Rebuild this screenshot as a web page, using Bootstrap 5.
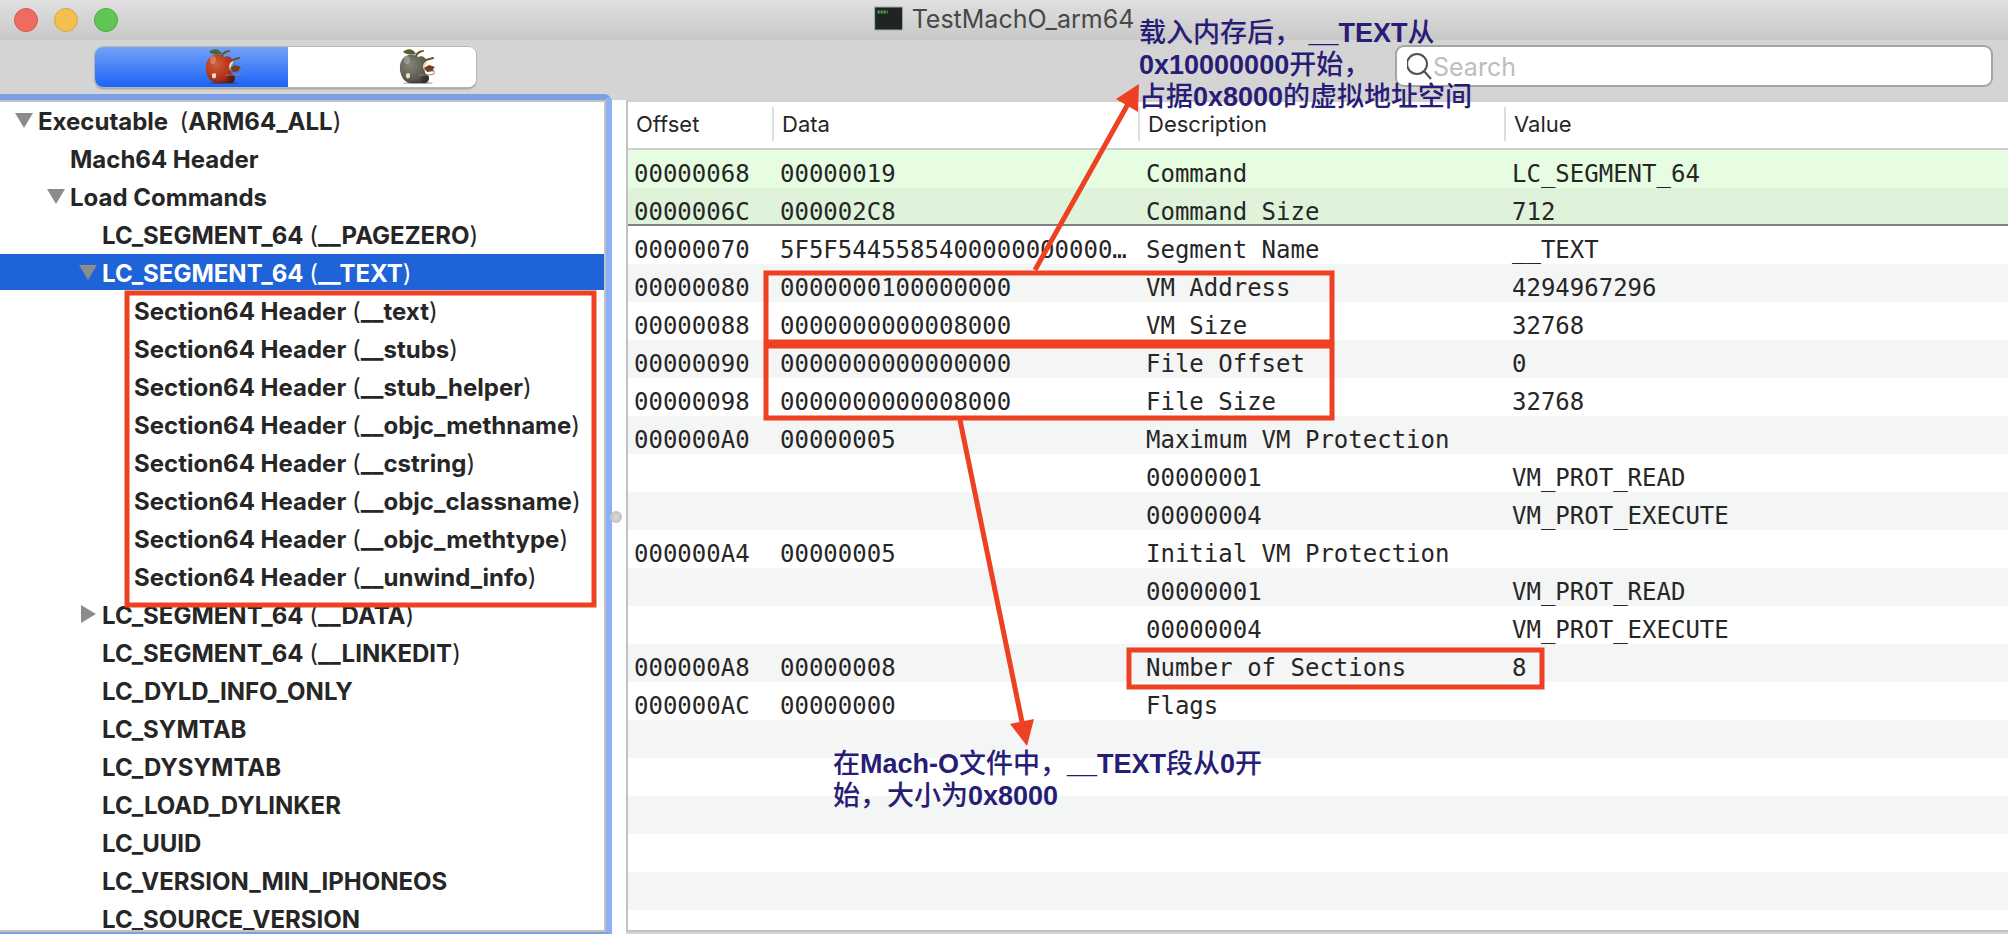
<!DOCTYPE html>
<html lang="zh-CN">
<head>
<meta charset="utf-8">
<meta name="viewport" content="width=device-width, initial-scale=1">
<title>TestMachO_arm64</title>
<link href="https://cdn.jsdelivr.net/npm/bootstrap@5.3.0/dist/css/bootstrap.min.css" rel="stylesheet">
<style>
  body { font-family: Inter, "Noto Sans CJK SC", sans-serif; color: #262626; background: #d4d4d4; }
  .titlebar { height: 40px; background: linear-gradient(#e0e0e0, #c8c8c8); padding: 0 14px; }
  .light { width: 24px; height: 24px; border: 1px solid; border-radius: 50%; padding: 0; }
  .light-close { background: #ee6b60; border-color: #d9564b; }
  .light-min { background: #f5bf4f; border-color: #dba53c; }
  .light-zoom { background: #61c554; border-color: #4eaa41; }
  .caption { font-size: 25px; line-height: 30px; color: #484848; }
  .toolbar { height: 54px; background: #d4d4d4; padding: 5px 15px 7px 95px; }
  .segments { width: 381px; height: 40px; border-radius: 8px; background: #fff; box-shadow: 0 0 0 1px #b5b5b5, 0 2px 2px #9a9a9a; overflow: hidden; margin-top: 2px; }
  .segments .btn { border: 0; border-radius: 0; padding: 1px 45px 3px 0; text-align: right; line-height: 0; }
  .segments .seg-on { width: 193px; background: linear-gradient(#73a2f6, #1c63f7); }
  .segments .seg-off { width: 188px; padding-right: 39px; background: #fff; }
  .searchbox { width: 598px; height: 42px; border: 2px solid #a5a5a5; border-radius: 9px; background: #fff; padding-left: 10px; }
  .searchbox input { border: 0; outline: 0; font-size: 25px; line-height: 34px; padding: 2px 0 0; background: transparent; color: #262626; }
  .searchbox input::placeholder { color: #bdbdbd; opacity: 1; }

  .sidebar { width: 612px; background: #fff; border: solid #8bb0f3; border-width: 6px 6px 2px 0; border-top-color: #7a9fe2; border-bottom-color: #7a9fe2; border-top-right-radius: 8px; }
  .tree-frame { border: 2px solid #c2c2c2; border-left: 0; }
  .tree-row { height: 36px; margin-bottom: 2px; font-size: 24px; line-height: 39px; font-weight: 700; white-space: pre; }
  .tree-row b { font-weight: 400; }
  .tree-row button { width: 24px; height: 36px; border: 0; padding: 0; background: transparent; line-height: 0; }
  .lvl-0 { padding-left: 38px; } .lvl-1 { padding-left: 70px; } .lvl-2 { padding-left: 102px; } .lvl-3 { padding-left: 134px; }
  .tree-row.has-toggle button { margin-left: -24px; }
  .tree-row.selected { background: #1f63d9; color: #fff; }

  .splitter { width: 14px; background: #fdfdfd; margin-top: 6px; }
  .grip { width: 12px; height: 12px; border-radius: 50%; background: radial-gradient(#dcdcdc, #b8b8b8); margin-left: -2px; }
  .grid-pane { border: solid #c2c2c2; border-width: 2px 0 2px 2px; border-top-color: #d0d0d0; margin-top: 6px; background: #fff; }
  .stripes { background: repeating-linear-gradient(#fff 0 38px, #f4f5f5 38px 76px); }
  .stripes-odd { background: repeating-linear-gradient(#f4f5f5 0 38px, #fff 38px 76px); }
  .fields { table-layout: fixed; border-collapse: separate; border-spacing: 0; }
  .fields th { height: 48px; padding: 0 0 2px 8px; border-bottom: 2px solid #d0d0d0; background: #fff; font-size: 22px; line-height: 34px; font-weight: 400; vertical-align: middle; }
  .fields th span { display: block; margin-left: -10px; padding-left: 8px; border-left: 2px solid #dedede; }
  .fields th:first-child span { border-color: transparent; }
  .fields td { height: 38px; padding: 10px 0 0 6px; font: 24px/28px "DejaVu Sans Mono", monospace; white-space: nowrap; }
  .c-offset { width: 146px; } .c-data { width: 366px; } .c-desc { width: 366px; }
  .head-a td { background: #e6fde2; }
  .head-b td { background: #dff3da; box-shadow: inset 0 -2px #7f7f7f; }
  .bottom-edge { height: 2px; background: #d4d4d4; }

  .marks { left: 0; top: 0; pointer-events: none; overflow: visible; }
  .note { font: 700 27px/32px "Liberation Sans", "Noto Sans CJK SC", sans-serif; color: #271d76; white-space: nowrap; }
  .note i { font-style: normal; font-weight: 500; }
  .note-memory { left: 1139px; top: 17px; }
  .note-file { left: 833px; top: 748px; }
</style>
</head>
<body class="vh-100 overflow-hidden d-flex flex-column position-relative">
<svg width="0" height="0" class="position-absolute" aria-hidden="true">
  <defs>
    <g id="apple-shape">
      <path d="M19 9C14 4 3 6 1 17c-1 10 4 18 11 18h14c4-1 5-5 3-8-3-1-4-4-3-6-2-1-1-6 2-8-2-4-5-6-9-4z"/>
    </g>
    <g id="apple-detail">
      <ellipse cx="19" cy="35" rx="15" ry="1" fill="#223" opacity=".4"/>
      <path d="M4 4c4-4 10-4 13 2-4 1-9 1-13-2z" fill="#566034"/>
      <path d="M17 9c0-3 3-5 6-6M27 12l7-2" stroke="#6b5526" stroke-width="2" fill="none"/>
      <circle cx="24" cy="3" r="1" fill="#7a4a20"/><circle cx="34" cy="10" r="1" fill="#8a3a20"/>
      <path d="M28 13c-4 1-5 6-3 9l2-1-1-3 2-3z" fill="#e6d6ae"/>
      <path d="M25 20l5-3 6 2-2 2 1 2-7 1z" fill="#7a3d1c"/>
      <path d="M20 27h10l5-1c1-2 0-4-2-3" stroke="#9a8074" stroke-width="1" fill="none"/>
      <circle cx="26" cy="31" r="4" fill="#000" opacity=".2"/>
      <path d="M7 26c1-1 4-1 4 0v3c-1 2-4 2-4-1zM9 25l1-2" fill="#f0e2c0"/>
      <ellipse cx="8" cy="12" rx="3" ry="4" fill="#fff" opacity=".25"/>
    </g>
    <radialGradient id="red" cx=".35" cy=".35" r=".8"><stop offset="0" stop-color="#d0603a"/><stop offset=".6" stop-color="#b3321a"/><stop offset="1" stop-color="#6e1c10"/></radialGradient>
    <radialGradient id="olive" cx=".35" cy=".35" r=".8"><stop offset="0" stop-color="#85857a"/><stop offset=".6" stop-color="#5e5e52"/><stop offset="1" stop-color="#3a3a30"/></radialGradient>
  </defs>
</svg>

<header class="titlebar d-flex align-items-center flex-shrink-0 position-relative">
  <div class="d-flex gap-3">
    <button class="light light-close" aria-label="Close"></button>
    <button class="light light-min" aria-label="Minimize"></button>
    <button class="light light-zoom" aria-label="Zoom"></button>
  </div>
  <div class="caption position-absolute top-0 start-50 translate-middle-x d-flex align-items-center gap-2 mt-1">
    <svg width="30" height="26" viewBox="0 0 30 26" aria-hidden="true"><rect x="1" y="1" width="28" height="23" fill="#202423" stroke="#9fb0ba"/><path d="M4 6h10" stroke="#4fae55" stroke-width="3" stroke-dasharray="2 1"/></svg>
    <span>TestMachO_arm64</span>
  </div>
</header>

<div class="toolbar d-flex justify-content-between align-items-start flex-shrink-0">
  <div class="segments d-flex" role="group" aria-label="View">
    <button class="btn seg-on" aria-label="RAW" aria-pressed="true"><svg width="38" height="36" viewBox="0 0 38 36"><use href="#apple-shape" fill="url(#red)"/><use href="#apple-detail"/></svg></button>
    <button class="btn seg-off" aria-label="RVA" aria-pressed="false"><svg width="38" height="36" viewBox="0 0 38 36"><use href="#apple-shape" fill="url(#olive)"/><use href="#apple-detail"/></svg></button>
  </div>
  <label class="searchbox d-flex align-items-center">
    <svg width="26" height="28" viewBox="0 0 26 28" fill="none" stroke="#505050" stroke-width="2" aria-hidden="true"><circle cx="10" cy="12" r="10"/><path d="M17 19l7 8"/></svg>
    <input type="search" class="flex-grow-1" placeholder="Search" aria-label="Search">
  </label>
</div>

<main class="d-flex flex-grow-1 overflow-hidden">
  <nav class="sidebar flex-shrink-0 d-flex flex-column">
    <div class="tree-frame flex-grow-1 overflow-hidden">
      <ul class="list-unstyled mb-0" id="tree"></ul>
    </div>
  </nav>
  <div class="splitter flex-shrink-0 d-flex align-items-center"><span class="grip flex-shrink-0"></span></div>
  <section class="flex-grow-1 d-flex flex-column overflow-hidden">
    <div class="grid-pane flex-grow-1 d-flex flex-column overflow-hidden">
      <table class="fields w-100 flex-shrink-0">
        <colgroup><col class="c-offset"><col class="c-data"><col class="c-desc"><col></colgroup>
        <thead><tr><th><span>Offset</span></th><th><span>Data</span></th><th><span>Description</span></th><th><span>Value</span></th></tr></thead>
        <tbody id="rows" class="stripes"></tbody>
      </table>
      <div class="stripes-odd flex-grow-1"></div>
    </div>
    <div class="bottom-edge flex-shrink-0"></div>
  </section>
</main>

<svg class="marks position-absolute" width="1" height="1" fill="none" stroke="#ee4023" stroke-width="5" aria-hidden="true">
  <rect x="127" y="293" width="467" height="312"/>
  <rect x="766" y="273" width="566" height="69"/>
  <rect x="766" y="346" width="566" height="72"/>
  <rect x="1129" y="650" width="413" height="37"/>
  <path d="M1035 270L1128 104M960 420L1022 722"/>
  <path d="M1139 84L1116 99L1138 112zM1027 746L1010 724L1034 719z" fill="#ee4023" stroke="none"/>
</svg>
<div class="note note-memory position-absolute"><i>载入内存后，</i> __TEXT<i>从</i><br>0x10000000<i>开始，</i><br><i>占据</i>0x8000<i>的虚拟地址空间</i></div>
<div class="note note-file position-absolute"><i>在</i>Mach-O<i>文件中，</i>__TEXT<i>段从</i>0<i>开</i><br><i>始，大小为</i>0x8000</div>
<script>
  // [level, label, toggle state]
  const tree = [
    [0, 'Executable  (ARM64_ALL)', 'open'], [1, 'Mach64 Header'], [1, 'Load Commands', 'open'],
    [2, 'LC_SEGMENT_64 (__PAGEZERO)'], [2, 'LC_SEGMENT_64 (__TEXT)', 'open selected'],
    ...['text', 'stubs', 'stub_helper', 'objc_methname', 'cstring', 'objc_classname', 'objc_methtype', 'unwind_info'].map(n => [3, `Section64 Header (__${n})`]),
    [2, 'LC_SEGMENT_64 (__DATA)', 'closed'], [2, 'LC_SEGMENT_64 (__LINKEDIT)'],
    ...['DYLD_INFO_ONLY', 'SYMTAB', 'DYSYMTAB', 'LOAD_DYLINKER', 'UUID', 'VERSION_MIN_IPHONEOS', 'SOURCE_VERSION'].map(n => [2, 'LC_' + n])
  ];
  const arrow = { open: 'M1 11h18l-9 15z', closed: 'M3 9v18l15-9z' };
  document.getElementById('tree').innerHTML = tree.map(([lvl, text, state = '']) => {
    const kind = state.split(' ')[0];
    const toggle = kind ? `<button aria-label="Toggle"><svg width="24" height="36" fill="#8c8c8c"><path d="${arrow[kind]}"/></svg></button>` : '';
    return `<li class="tree-row lvl-${lvl} d-flex ${kind ? 'has-toggle' : ''} ${state.includes('selected') ? 'selected' : ''}">${toggle}<span>${text.replace(/[()]/g, '<b>$&</b>')}</span></li>`;
  }).join('');

  const rows = [
    ['00000068', '00000019', 'Command', 'LC_SEGMENT_64'], ['0000006C', '000002C8', 'Command Size', '712'],
    ['00000070', '5F5F5445585400000000000…', 'Segment Name', '__TEXT'],
    ['00000080', '0000000100000000', 'VM Address', '4294967296'], ['00000088', '0000000000008000', 'VM Size', '32768'],
    ['00000090', '0000000000000000', 'File Offset', '0'], ['00000098', '0000000000008000', 'File Size', '32768'],
    ['000000A0', '00000005', 'Maximum VM Protection', ''], ['', '', '00000001', 'VM_PROT_READ'], ['', '', '00000004', 'VM_PROT_EXECUTE'],
    ['000000A4', '00000005', 'Initial VM Protection', ''], ['', '', '00000001', 'VM_PROT_READ'], ['', '', '00000004', 'VM_PROT_EXECUTE'],
    ['000000A8', '00000008', 'Number of Sections', '8'], ['000000AC', '00000000', 'Flags', '']
  ];
  document.getElementById('rows').innerHTML = rows.map((r, i) =>
    `<tr class="${['head-a', 'head-b'][i] || ''}">${r.map(c => `<td>${c}</td>`).join('')}</tr>`).join('');
</script>
<script src="https://cdn.jsdelivr.net/npm/bootstrap@5.3.0/dist/js/bootstrap.bundle.min.js"></script>
</body>
</html>
